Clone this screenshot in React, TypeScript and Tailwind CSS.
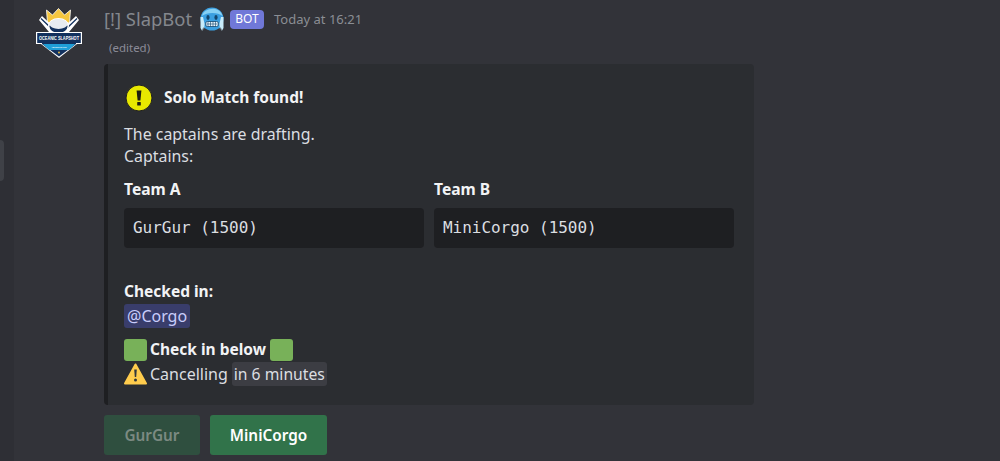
import React from "react";

const Logo = () => (
  <svg width="46" height="50" viewBox="0 0 46 50" className="shrink-0 overflow-visible">
    <path d="M11.5 15 L10.5 2 L16.5 7 L22.5 0.5 L28.5 7 L34.5 2 L33.5 15 Z" fill="#f5c63f" stroke="#fff" strokeWidth="0.8" />
    <path d="M3 12 L6 8 L23 24 L40 8 L43 12 L33 24 L22 26 L13 24 Z" fill="#fff" />
    <path d="M5 10.5 L16 21 M41 10.5 L30 21" stroke="#12315e" strokeWidth="1.3" />
    <ellipse cx="22.5" cy="18" rx="10.5" ry="8" fill="#fff" />
    <ellipse cx="22.5" cy="18.5" rx="9" ry="6.5" fill="#12315e" />
    <ellipse cx="22.5" cy="16" rx="9" ry="5" fill="#e6ebf1" />
    <path d="M0 24 H46 V36 H41 L23 50 L5 36 H0 Z" fill="#fff" />
    <rect x="1.2" y="25" width="43.6" height="10" fill="#12315e" />
    <path d="M6 35 H40 V36 L23 48.5 L6 36 Z" fill="#12315e" />
    <path d="M7 36 H39 L33 42 H13 Z" fill="#1f9fd8" />
    <text x="23" y="32" textAnchor="middle" fontSize="4.6" fontWeight="700" fill="#fff" textLength="40" lengthAdjust="spacingAndGlyphs" style={{ fontFamily: '"Liberation Sans", sans-serif' }}>OCEANIC SLAPSHOT</text>
    <text x="23" y="40.4" textAnchor="middle" fontSize="2.4" fontWeight="700" fill="#fff" textLength="15" lengthAdjust="spacingAndGlyphs" style={{ fontFamily: '"Liberation Sans", sans-serif' }}>AMATEUR LEAGUE</text>
    <circle cx="23" cy="44.5" r="0.9" fill="#f5c63f" />
  </svg>
);

const ColdFace = () => (
  <svg width="26" height="26" viewBox="0 0 26 26" className="shrink-0">
    <circle cx="13" cy="13" r="11.5" fill="#3b9fe0" />
    <path d="M3 10 C4 2 21 -1 23.5 10 C19 6 8 6 3 10 Z" fill="#86d0f4" />
    <path d="M1.5 11 V22 L3.2 25 L4.2 21 L5 24 L5.6 18 L4 11 Z M24.5 11 V22 L22.8 25 L21.8 21 L21 24 L20.4 18 L22 11 Z" fill="#c8ecfa" />
    <ellipse cx="9" cy="11.5" rx="1.6" ry="2.4" fill="#12466e" />
    <ellipse cx="17" cy="11.5" rx="1.6" ry="2.4" fill="#12466e" />
    <rect x="6.5" y="15.5" width="13" height="5" rx="2" fill="#eaf6fc" stroke="#12466e" strokeWidth="0.8" />
    <path d="M9 15.5 V20.5 M11.5 15.5 V20.5 M14 15.5 V20.5 M16.5 15.5 V20.5 M6.5 18 H19.5" stroke="#12466e" strokeWidth="0.6" />
  </svg>
);

const Warn = () => (
  <svg width="23" height="22" viewBox="0 0 23 22" className="shrink-0">
    <path d="M11.5 1.5 L22 20.5 H1 Z" fill="#ffcc4d" stroke="#ffcc4d" strokeWidth="2" strokeLinejoin="round" />
    <path d="M10.2 6.5 H12.8 L12.2 14 H10.8 Z" fill="#31373d" />
    <circle cx="11.5" cy="17" r="1.5" fill="#31373d" />
  </svg>
);

const Exclaim = () => (
  <svg width="28" height="28" viewBox="0 0 28 28" className="shrink-0">
    <circle cx="14" cy="14" r="13" fill="#e8e800" stroke="#202020" strokeWidth="1" />
    <path d="M11.6 6.5 H16.4 L15.4 16.5 H12.6 Z" fill="#1c1c10" />
    <rect x="12.2" y="18" width="3.6" height="3.6" rx="0.6" fill="#1c1c10" />
  </svg>
);

const Green = () => <span className="w-[23px] h-[22px] rounded-[3px] bg-[#78b159] shrink-0" />;

const Team = ({ title, value }: { title: string; value: string }) => (
  <div className="w-[300px]">
    <div className="font-bold text-[15.6px] leading-[20px] text-[#f2f3f5]">{title}</div>
    <div className="mt-[9px] h-[40px] rounded-[4px] bg-[#1e1f22] px-[9px] flex items-center text-[16px] text-[#dbdee1] font-['DejaVu_Sans_Mono',monospace] tracking-[-0.03px]">
      {value}
    </div>
  </div>
);

export default function App() {
  return (
    <div className="w-[1000px] h-[461px] overflow-hidden bg-[#323339] flex font-['Noto_Sans',sans-serif] text-[#dbdee1]">
      <div className="w-[14px] h-full bg-[#2e2f35] pt-[140px] shrink-0">
        <div className="w-[4px] h-[41px] bg-[#3f4147] rounded-r-[4px]" />
      </div>
      <div className="pl-[22px] pt-[8px] w-[90px] shrink-0">
        <Logo />
      </div>
      <div className="w-[650px] shrink-0">
        <div className="h-[37px] pt-[1px] flex items-center">
          <span className="text-[18.4px] text-[#84878d] whitespace-nowrap">[!] SlapBot</span>
          <span className="ml-[7px]"><ColdFace /></span>
          <span className="ml-[5px] h-[19px] w-[34px] rounded-[4px] bg-[#7078d8] text-white text-[12px] flex items-center justify-center">BOT</span>
          <span className="ml-[10px] text-[13px] text-[#8b8e94] pt-[2px]">Today at 16:21</span>
        </div>
        <div className="pl-[5px] mt-[3px] h-[16px] text-[11.5px] leading-[16px] text-[#8b8b98]">(edited)</div>
        <div className="mt-[8px] h-[341px] rounded-[4px] border-l-[4px] border-[#1e1f22] bg-[#2b2d31] pl-[16px] pt-[21px]">
          <div className="flex items-center h-[26px] pl-[1px]">
            <Exclaim />
            <span className="ml-[11px] font-bold text-[15.5px] text-[#f2f3f5]">Solo Match found!</span>
          </div>
          <div className="mt-[12px] text-[15.9px] leading-[22px]">
            <div>The captains are drafting.</div>
            <div>Captains:</div>
          </div>
          <div className="mt-[12px] flex gap-[10px]">
            <Team title="Team A" value="GurGur (1500)" />
            <Team title="Team B" value="MiniCorgo (1500)" />
          </div>
          <div className="mt-[32px] font-bold text-[15.5px] leading-[22px] text-[#f2f3f5]">Checked in:</div>
          <div className="mt-[2px] h-[24px] flex">
            <span className="rounded-[3px] bg-[#5865f2]/30 px-[3px] text-[16px] leading-[24px] text-[#c9cdfb]">@Corgo</span>
          </div>
          <div className="mt-[11px] h-[22px] flex items-center gap-[3px]">
            <Green />
            <span className="font-bold text-[15.5px] text-[#f2f3f5] mr-[1px]">Check in below</span>
            <Green />
          </div>
          <div className="mt-[1px] h-[24px] flex items-center">
            <Warn />
            <span className="ml-[3px] text-[16px]">Cancelling</span>
            <span className="ml-[4px] bg-[#3c3d43] rounded-[3px] px-[2px] h-[24px] leading-[24px] text-[15.7px]">in 6 minutes</span>
          </div>
        </div>
        <div className="mt-[10px] flex gap-[10px]">
          <div className="w-[96px] h-[40px] rounded-[3px] bg-[#2f4f3f] text-[#7c8a82] font-semibold text-[15.3px] flex items-center justify-center">GurGur</div>
          <div className="w-[117px] h-[40px] rounded-[3px] bg-[#31734a] text-white font-semibold text-[15.3px] flex items-center justify-center">MiniCorgo</div>
        </div>
      </div>
    </div>
  );
}
